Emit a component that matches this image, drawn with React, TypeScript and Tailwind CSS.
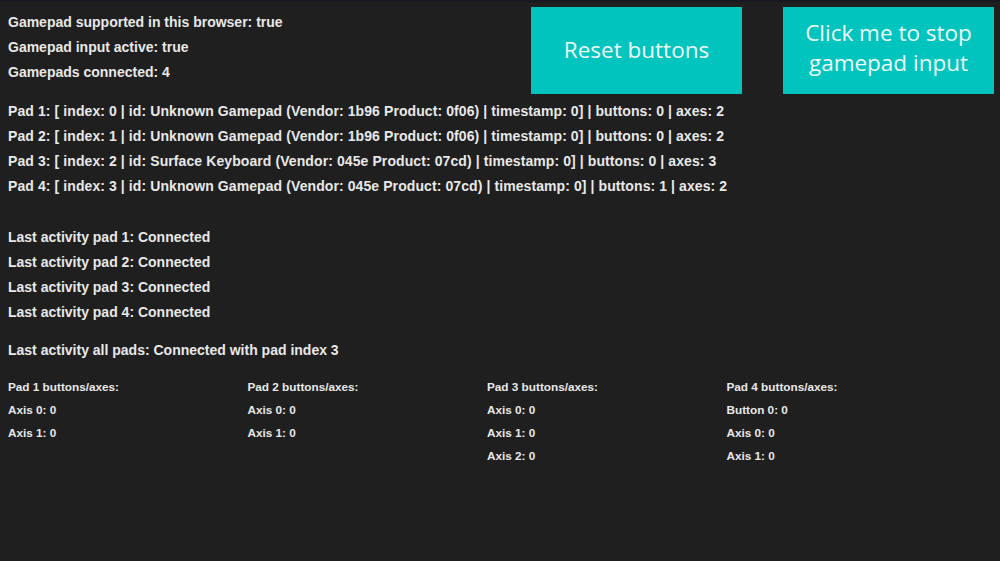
import React from "react";

const pads = [
  "Pad 1: [ index: 0 | id: Unknown Gamepad (Vendor: 1b96 Product: 0f06) | timestamp: 0] | buttons: 0 | axes: 2",
  "Pad 2: [ index: 1 | id: Unknown Gamepad (Vendor: 1b96 Product: 0f06) | timestamp: 0] | buttons: 0 | axes: 2",
  "Pad 3: [ index: 2 | id: Surface Keyboard (Vendor: 045e Product: 07cd) | timestamp: 0] | buttons: 0 | axes: 3",
  "Pad 4: [ index: 3 | id: Unknown Gamepad (Vendor: 045e Product: 07cd) | timestamp: 0] | buttons: 1 | axes: 2",
];

const cols = [
  { title: "Pad 1 buttons/axes:", items: ["Axis 0: 0", "Axis 1: 0"] },
  { title: "Pad 2 buttons/axes:", items: ["Axis 0: 0", "Axis 1: 0"] },
  { title: "Pad 3 buttons/axes:", items: ["Axis 0: 0", "Axis 1: 0", "Axis 2: 0"] },
  { title: "Pad 4 buttons/axes:", items: ["Button 0: 0", "Axis 0: 0", "Axis 1: 0"] },
];

export default function App() {
  return (
    <div className="w-[1000px] h-[561px] bg-[#1f1f1f] text-[#e8e8e8] overflow-hidden border-t-2 border-[#181822] font-['Liberation_Sans',Arial,sans-serif] font-bold">
      <div className="flex justify-between items-start">
        <div className="pl-2 pt-[8px] text-[14px] leading-[25px]">
          <div>Gamepad supported in this browser: true</div>
          <div>Gamepad input active: true</div>
          <div>Gamepads connected: 4</div>
        </div>
        <div className="flex gap-[41px] pt-[5px] pr-[6px] font-['Open_Sans',sans-serif] font-normal text-[22.5px] text-[#effcfb]">
          <button className="w-[211px] h-[87px] bg-[#00c4bd] flex items-center justify-center leading-[30px] pb-[2px]">
            Reset buttons
          </button>
          <button className="w-[211px] h-[87px] bg-[#00c4bd] flex items-center justify-center text-center leading-[30px] pb-[6px]">
            Click me to stop
            <br />
            gamepad input
          </button>
        </div>
      </div>
      <div className="pl-2 mt-[5px] text-[14px] leading-[25px] tracking-[0.09px]">
        {pads.map((p) => (
          <div key={p}>{p}</div>
        ))}
      </div>
      <div className="pl-2 mt-[26px] text-[14px] leading-[25px]">
        <div>Last activity pad 1: Connected</div>
        <div>Last activity pad 2: Connected</div>
        <div>Last activity pad 3: Connected</div>
        <div>Last activity pad 4: Connected</div>
      </div>
      <div className="pl-2 mt-[13px] text-[14px] leading-[25px]">
        Last activity all pads: Connected with pad index 3
      </div>
      <div className="pl-2 mt-[12px] grid grid-cols-[239.5px_239.5px_239.5px_239.5px] text-[11.75px] leading-[23px]">
        {cols.map((c) => (
          <div key={c.title}>
            <div>{c.title}</div>
            {c.items.map((i) => (
              <div key={i}>{i}</div>
            ))}
          </div>
        ))}
      </div>
    </div>
  );
}
